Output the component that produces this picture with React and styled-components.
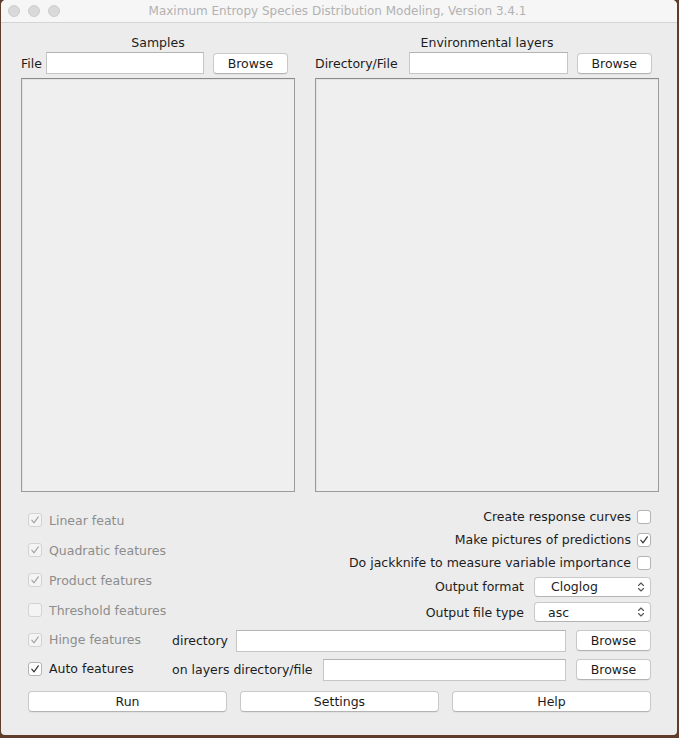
import React from 'react';
import styled, { createGlobalStyle } from 'styled-components';

const GlobalStyle = createGlobalStyle`
  html, body {
    margin: 0;
    padding: 0;
    background: #5e3d2c;
  }
  body {
    font-family: "DejaVu Sans", "Liberation Sans", sans-serif;
    font-size: 12.5px;
    color: #1c1c1c;
  }
`;

const Window = styled.div`
  margin: 0 0 0 1px;
  width: 676px;
  height: 735px;
  background: #ececec;
  border-radius: 5px 5px 4px 4px;
  display: flex;
  flex-direction: column;
  overflow: hidden;
`;

const TitleBar = styled.div`
  height: 23px;
  flex: none;
  display: flex;
  align-items: center;
  background: #f6f6f6;
  border-bottom: 1px solid #d4d4d4;
  box-sizing: border-box;
`;

const Lights = styled.div`
  display: flex;
  gap: 8px;
  padding-left: 7px;
`;

const Light = styled.span`
  width: 12px;
  height: 12px;
  border-radius: 50%;
  background: #d9d9d9;
  border: 1px solid #cdcdcd;
  box-sizing: border-box;
`;

const Title = styled.div`
  flex: 1;
  text-align: center;
  color: #b2b2b2;
  font-size: 12px;
  margin-right: 62px;
`;

const Body = styled.div`
  flex: 1;
  display: flex;
  flex-direction: column;
  padding: 12px 0 0 20px;
`;

const TopPanels = styled.div`
  display: flex;
  gap: 20px;
`;

const Panel = styled.div`
  width: ${(p) => p.$width}px;
  flex: none;
  display: flex;
  flex-direction: column;
`;

const PanelTitle = styled.div`
  text-align: center;
  height: 17px;
  line-height: 15px;
`;

const FieldRow = styled.div`
  display: flex;
  align-items: center;
  height: 22px;
`;

const FieldLabel = styled.span`
  margin-right: ${(p) => p.$gap || 4}px;
  white-space: nowrap;
`;

const TextBox = styled.div`
  width: ${(p) => (p.$width ? `${p.$width}px` : 'auto')};
  flex: ${(p) => (p.$width ? 'none' : '1')};
  height: 22px;
  box-sizing: border-box;
  background: #fff;
  border: 1px solid #c6c6c6;
  border-top-color: #b3b3b3;
`;

const Button = styled.button`
  font-family: inherit;
  font-size: 12.5px;
  color: #1c1c1c;
  height: 21px;
  width: ${(p) => (p.$width ? `${p.$width}px` : 'auto')};
  flex: ${(p) => (p.$width ? 'none' : '1')};
  margin-left: ${(p) => p.$gap || 0}px;
  padding: 0;
  background: #fff;
  border: 1px solid #c9c9c9;
  border-bottom-color: #b4b4b4;
  border-radius: 4px;
  box-shadow: 0 1px 0 rgba(0, 0, 0, 0.04);
`;

const ListBox = styled.div`
  margin-top: 4px;
  height: 414px;
  box-sizing: border-box;
  background: #efefef;
  border: 1px solid #9b9b9b;
  border-top-color: #8a8a8a;
  box-shadow: inset 1px 1px 0 #e2e2e2;
`;

const Options = styled.div`
  display: flex;
  margin: 13px 0 1px;
  padding-left: 7px;
  padding-right: 26px;
`;

const CheckColumn = styled.div`
  width: 144px;
  display: flex;
  flex-direction: column;
`;

const CheckRow = styled.div`
  display: flex;
  align-items: center;
  height: 30px;
  gap: 7px;
  color: ${(p) => (p.$disabled ? '#8d8d8d' : '#1c1c1c')};
`;

const CheckLabel = styled.span`
  white-space: nowrap;
  overflow: hidden;
  max-width: ${(p) => (p.$clip ? `${p.$clip}px` : 'none')};
`;

const Box = styled.span`
  width: 14px;
  height: 14px;
  flex: none;
  box-sizing: border-box;
  border-radius: 3px;
  border: 1px solid ${(p) => (p.$disabled ? '#d3d3d3' : '#b3b3b3')};
  background: ${(p) => (p.$disabled ? '#f4f4f4' : '#fff')};
  display: flex;
  align-items: center;
  justify-content: center;
`;

const RightColumn = styled.div`
  flex: 1;
  display: flex;
  flex-direction: column;
  align-items: flex-end;
`;

const OptRow = styled.div`
  display: flex;
  align-items: center;
  justify-content: flex-end;
  height: ${(p) => p.$h || 23}px;
  gap: ${(p) => p.$gap || 6}px;
`;

const Select = styled.div`
  width: 117px;
  height: 20px;
  box-sizing: border-box;
  background: #fff;
  border: 1px solid #c9c9c9;
  border-bottom-color: #b4b4b4;
  border-radius: 4px;
  display: flex;
  align-items: center;
  justify-content: space-between;
  padding: 0 5px 0 ${(p) => p.$pad || 16}px;
`;

const DirRow = styled.div`
  display: grid;
  grid-template-columns: 144px auto 1fr 85px;
  align-items: center;
  height: 29px;
  padding-left: 7px;
  padding-right: 26px;
`;

const DirCheck = styled(CheckRow)`
  margin-top: -2px;
`;

const DirLabel = styled.span`
  margin-right: ${(p) => p.$gap || 6}px;
  white-space: nowrap;
`;

const ButtonBar = styled.div`
  display: flex;
  gap: 13px;
  margin-top: 7px;
  padding-left: 7px;
  padding-right: 26px;
`;

const Check = ({ on, disabled }) => (
  <Box $disabled={disabled}>
    {on && (
      <svg width="10" height="10" viewBox="0 0 10 10">
        <path d="M1.8 5.2 L4 7.8 L8.3 1.8" fill="none" stroke={disabled ? '#a5a5a5' : '#333'} strokeWidth="1.2" strokeLinecap="round" strokeLinejoin="round" />
      </svg>
    )}
  </Box>
);

const Arrows = () => (
  <svg width="8" height="12" viewBox="0 0 8 12">
    <path d="M1.5 4.5 L4 2 L6.5 4.5 M1.5 7.5 L4 10 L6.5 7.5" fill="none" stroke="#555" strokeWidth="1.1" strokeLinecap="round" strokeLinejoin="round" />
  </svg>
);

const features = [
  { label: 'Linear features', on: true, clip: 76 },
  { label: 'Quadratic features', on: true },
  { label: 'Product features', on: true },
  { label: 'Threshold features', on: false },
];

export default function App() {
  return (
    <>
      <GlobalStyle />
      <Window>
        <TitleBar>
          <Lights>
            <Light />
            <Light />
            <Light />
          </Lights>
          <Title>Maximum Entropy Species Distribution Modeling, Version 3.4.1</Title>
        </TitleBar>
        <Body>
          <TopPanels>
            <Panel $width={274}>
              <PanelTitle>Samples</PanelTitle>
              <FieldRow>
                <FieldLabel>File</FieldLabel>
                <TextBox $width={158} />
                <Button $width={75} $gap={9}>Browse</Button>
              </FieldRow>
              <ListBox />
            </Panel>
            <Panel $width={344}>
              <PanelTitle>Environmental layers</PanelTitle>
              <FieldRow>
                <FieldLabel $gap={11}>Directory/File</FieldLabel>
                <TextBox $width={159} />
                <Button $width={75} $gap={9}>Browse</Button>
              </FieldRow>
              <ListBox />
            </Panel>
          </TopPanels>

          <Options>
            <CheckColumn>
              {features.map((f) => (
                <CheckRow key={f.label} $disabled>
                  <Check on={f.on} disabled />
                  <CheckLabel $clip={f.clip}>{f.label}</CheckLabel>
                </CheckRow>
              ))}
            </CheckColumn>
            <RightColumn>
              <OptRow>
                <span>Create response curves</span>
                <Check />
              </OptRow>
              <OptRow>
                <span>Make pictures of predictions</span>
                <Check on />
              </OptRow>
              <OptRow>
                <span>Do jackknife to measure variable importance</span>
                <Check />
              </OptRow>
              <OptRow $h={25} $gap={10}>
                <span>Output format</span>
                <Select>
                  <span>Cloglog</span>
                  <Arrows />
                </Select>
              </OptRow>
              <OptRow $h={26} $gap={10}>
                <span>Output file type</span>
                <Select $pad={13}>
                  <span>asc</span>
                  <Arrows />
                </Select>
              </OptRow>
            </RightColumn>
          </Options>

          <DirRow>
            <DirCheck $disabled>
              <Check on disabled />
              <CheckLabel>Hinge features</CheckLabel>
            </DirCheck>
            <DirLabel $gap={8}>directory</DirLabel>
            <TextBox />
            <Button $gap={10}>Browse</Button>
          </DirRow>
          <DirRow>
            <DirCheck>
              <Check on />
              <CheckLabel>Auto features</CheckLabel>
            </DirCheck>
            <DirLabel $gap={10}>on layers directory/file</DirLabel>
            <TextBox />
            <Button $gap={10}>Browse</Button>
          </DirRow>

          <ButtonBar>
            <Button>Run</Button>
            <Button>Settings</Button>
            <Button>Help</Button>
          </ButtonBar>
        </Body>
      </Window>
    </>
  );
}
